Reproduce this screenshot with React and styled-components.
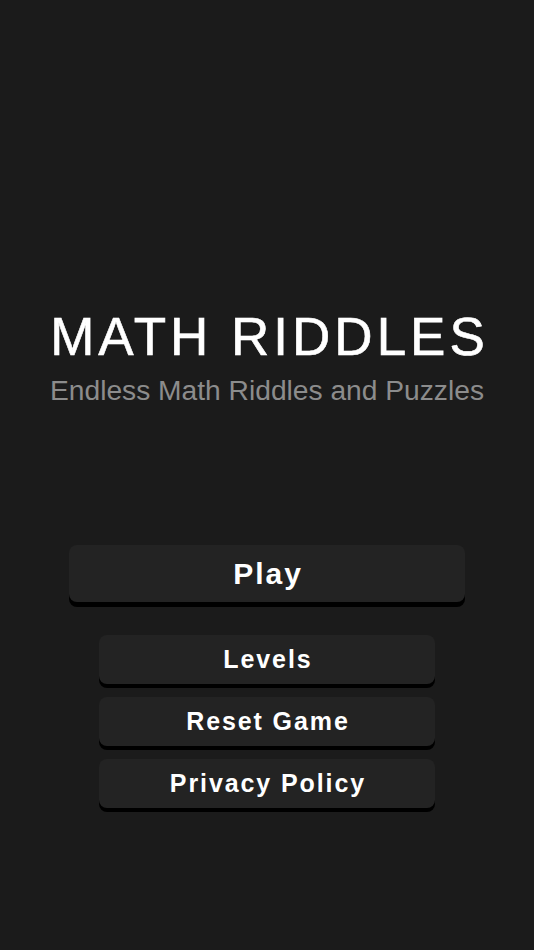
import React from "react";
import styled, { createGlobalStyle } from "styled-components";

const GlobalStyle = createGlobalStyle`
  html, body {
    margin: 0;
    padding: 0;
    background-color: #1b1b1b;
  }
  * {
    box-sizing: border-box;
  }
`;

const Screen = styled.div`
  width: 534px;
  height: 950px;
  display: flex;
  flex-direction: column;
  align-items: center;
  padding-top: 310px;
  background-color: #1b1b1b;
  font-family: "Liberation Sans", Arial, sans-serif;
`;

const Header = styled.div`
  display: flex;
  flex-direction: column;
  align-items: center;
  gap: 12.5px;
`;

const Title = styled.h1`
  margin: 0;
  padding-left: 5px;
  font-size: 53px;
  line-height: 1;
  font-weight: 400;
  letter-spacing: 4px;
  color: #ffffff;
  -webkit-text-stroke: 0.6px #ffffff;
`;

const Subtitle = styled.p`
  margin: 0;
  font-size: 28.2px;
  line-height: 1;
  color: #8c8c8c;
`;

const Menu = styled.div`
  display: flex;
  flex-direction: column;
  align-items: center;
  gap: 13px;
  margin-top: 141.5px;
`;

const Button = styled.button`
  display: flex;
  align-items: center;
  justify-content: center;
  width: ${(props) => (props.$big ? "396px" : "336px")};
  height: ${(props) => (props.$big ? "57px" : "49px")};
  margin-bottom: ${(props) => (props.$big ? "20px" : "0")};
  padding: 0 0 0 ${(props) => (props.$big ? "2px" : "1.9px")};
  border: none;
  border-radius: 8px;
  background-color: #232323;
  box-shadow: 0 ${(props) => (props.$big ? "5px" : "4px")} 0 #000000;
  color: #ffffff;
  font-family: "Liberation Sans", Arial, sans-serif;
  font-weight: 700;
  font-size: ${(props) => (props.$big ? "30px" : "25px")};
  letter-spacing: ${(props) => (props.$big ? "2px" : "1.9px")};
  cursor: pointer;
`;

export default function App() {
  return (
    <Screen>
      <GlobalStyle />
      <Header>
        <Title>MATH RIDDLES</Title>
        <Subtitle>Endless Math Riddles and Puzzles</Subtitle>
      </Header>
      <Menu>
        <Button $big>Play</Button>
        <Button>Levels</Button>
        <Button>Reset Game</Button>
        <Button>Privacy Policy</Button>
      </Menu>
    </Screen>
  );
}
